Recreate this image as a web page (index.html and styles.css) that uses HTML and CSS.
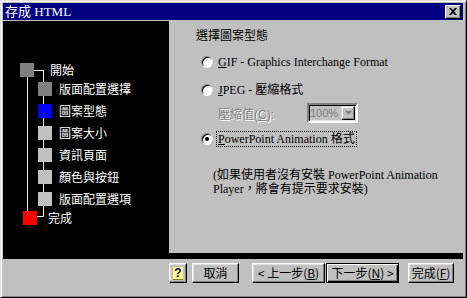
FILE: index.html
```html
<!DOCTYPE html>
<html lang="zh-Hant">
<head>
<meta charset="UTF-8" />
<title>存成 HTML</title>
<link rel="stylesheet" href="styles.css">
</head>
<body>
<div class="window">
  <div class="titlebar">
    <span class="title">存成 HTML</span>
    <button class="close" aria-label="關閉">
      <svg width="8" height="7" viewBox="0 0 8 7"><path d="M0 0h2l2 2 2-2h2L5 3.5 8 7H6L4 5 2 7H0l3-3.5z" fill="#000"/></svg>
    </button>
  </div>

  <div class="content">
    <div class="side">
      <svg class="tree-lines" width="166" height="232">
        <path d="M24.5 56V190M30 49.5H40.5M40.5 49V195.5M34 195.5H40.5" stroke="#f0f0f0" stroke-width="1" fill="none"/>
      </svg>
      <ul class="steps">
        <li class="step step-start"><span class="box dark"></span>開始</li>
        <li class="step"><span class="box dark"></span>版面配置選擇</li>
        <li class="step"><span class="box blue"></span>圖案型態</li>
        <li class="step"><span class="box"></span>圖案大小</li>
        <li class="step"><span class="box"></span>資訊頁面</li>
        <li class="step"><span class="box"></span>顏色與按鈕</li>
        <li class="step"><span class="box"></span>版面配置選項</li>
        <li class="step step-end"><span class="box red"></span>完成</li>
      </ul>
    </div>

    <div class="panel">
      <div class="heading">選擇圖案型態</div>

      <div class="option opt-gif">
        <span class="radio"></span>
        <span class="label"><u>G</u>IF - Graphics Interchange Format</span>
      </div>

      <div class="option opt-jpeg">
        <span class="radio"></span>
        <span class="label"><u>J</u>PEG - 壓縮格式</span>
      </div>

      <div class="quality">
        <span class="disabled-text">壓縮值(<u>C</u>):</span>
        <span class="combo">
          <span class="combo-value">100%</span>
          <span class="combo-btn">
            <svg width="7" height="4" viewBox="0 0 7 4"><path d="M0 0h7L3.5 4z" fill="#808080"/></svg>
          </span>
        </span>
      </div>

      <div class="option opt-ppt">
        <span class="radio checked"></span>
        <span class="label focus"><u>P</u>owerPoint Animation 格式</span>
      </div>

      <p class="note">(如果使用者沒有安裝 PowerPoint Animation<br>Player，將會有提示要求安裝)</p>
    </div>
  </div>

  <div class="footer">
    <button class="btn help" aria-label="說明"><span class="help-icon">?</span></button>
    <button class="btn btn-cancel">取消</button>
    <button class="btn btn-back">&lt; 上一步(<u>B</u>)</button>
    <button class="btn btn-next default">下一步(<u>N</u>) &gt;</button>
    <button class="btn btn-finish">完成(<u>F</u>)</button>
  </div>
</div>
</body>
</html>
```

FILE: styles.css
```css
/* dialogo estilo win95 */
body {
  margin: 0;
  background: #c0c0c0;
  font-family: "Liberation Serif", "Noto Sans CJK TC", serif;
  font-size: 12px;
  color: #000;
}
.window {
  width: 467px;
  height: 298px;
  box-sizing: border-box;
  background: #c0c0c0;
  border: 1px solid;
  border-color: #dfdfdf #000 #000 #dfdfdf;
  box-shadow: inset 1px 1px #fff, inset -1px -1px #808080;
  padding: 2px 3px 2px 2px;
}
.titlebar {
  height: 17px;
  background: #000080;
  color: #fff;
  display: flex;
  align-items: center;
  justify-content: space-between;
  padding: 0 2px 0 2px;
  margin-bottom: 1px;
}
.title {
  font-size: 13px;
  line-height: 17px;
}
.close {
  width: 16px;
  height: 14px;
  padding: 0;
  margin: 0;
  background: #c0c0c0;
  border: 1px solid;
  border-color: #fff #000 #000 #fff;
  box-shadow: inset -1px -1px #808080;
  display: flex;
  align-items: center;
  justify-content: center;
}

.content {
  display: flex;
  height: 232px;
  border-bottom: 6px solid #000;
}
.side {
  width: 166px;
  background: #000;
  color: #fff;
  position: relative;
}
.tree-lines {
  position: absolute;
  left: 0;
  top: 0;
}
.steps {
  list-style: none;
  margin: 0;
  padding: 42px 0 0 0;
  position: relative;
  font-family: "Noto Sans CJK TC", sans-serif;
  font-size: 12px;
}
.step {
  display: flex;
  align-items: flex-start;
  height: 22px;
  padding-left: 35px;
  line-height: 14px;
}
.step .box {
  width: 14px;
  height: 14px;
  background: #c0c0c0;
  margin-right: 7px;
  flex: none;
}
.step-start {
  height: 19px;
  padding-left: 17px;
}
.step-start .box {
  margin-right: 16px;
}
.step-end {
  margin-top: -3px;
  padding-left: 20px;
}
.step-end .box {
  margin-right: 11px;
}
.box.dark { background: #808080; }
.box.blue { background: #0000ff; }
.box.red { background: #ff0000; }

.panel {
  flex: 1;
  background: #c0c0c0;
  padding: 6px 0 0 27px;
}
.heading {
  font-family: "Noto Sans CJK TC", sans-serif;
  line-height: 16px;
  margin-bottom: 12px;
}
.option {
  display: flex;
  align-items: center;
  height: 14px;
  padding-left: 5px;
}
.opt-jpeg { margin-top: 14px; }
.opt-ppt { margin-top: 9px; }
.radio {
  width: 10px;
  height: 10px;
  border-radius: 50%;
  background: #fff;
  border: 1px solid;
  border-color: #808080 #dfdfdf #fff #808080;
  box-shadow: inset 1px 1px #000;
  margin-right: 4px;
  position: relative;
  flex: none;
}
.radio.checked::after {
  content: "";
  position: absolute;
  left: 3px;
  top: 3px;
  width: 4px;
  height: 4px;
  border-radius: 50%;
  background: #000;
}
.label {
  white-space: nowrap;
  line-height: 14px;
  padding: 0 1px;
}
.label.focus {
  outline: 1px dotted #000;
}
.quality {
  display: flex;
  align-items: center;
  height: 20px;
  margin-top: 6px;
  padding-left: 22px;
}
.disabled-text {
  color: #808080;
  text-shadow: 1px 1px #fff;
  font-family: "Liberation Sans", "Noto Sans CJK TC", sans-serif;
  width: 89px;
}
.combo {
  display: flex;
  align-items: center;
  width: 45px;
  height: 16px;
  border: 2px solid;
  border-color: #808080 #fff #fff #808080;
  box-shadow: inset 1px 1px #000, inset -1px -1px #dfdfdf;
  padding: 0 1px 0 1px;
}
.combo-value {
  flex: 1;
  color: #808080;
  font-family: "Liberation Sans", sans-serif;
  font-size: 11px;
  line-height: 14px;
}
.combo-btn {
  width: 14px;
  height: 14px;
  flex: none;
  box-sizing: border-box;
  border: 1px solid;
  border-color: #dfdfdf #000 #000 #dfdfdf;
  box-shadow: inset -1px -1px #808080, inset 1px 1px #fff;
  display: flex;
  align-items: center;
  justify-content: center;
}
.note {
  margin: 22px 0 0 17px;
  line-height: 14px;
  white-space: nowrap;
}

.footer {
  display: flex;
  padding: 4px 0 0 166px;
}
.btn {
  height: 20px;
  padding: 0;
  margin: 0;
  background: #c0c0c0;
  border: 1px solid;
  border-color: #fff #000 #000 #fff;
  box-shadow: inset -1px -1px #808080, inset 1px 1px #dfdfdf;
  font-family: "Noto Sans CJK TC", "Liberation Sans", sans-serif;
  font-size: 12px;
  color: #000;
  line-height: 16px;
}
.help {
  width: 18px;
  margin-right: 5px;
  display: flex;
  align-items: center;
  justify-content: center;
}
.help-icon {
  width: 10px;
  height: 12px;
  background: #ffff80;
  color: #000080;
  font-family: "Liberation Sans", sans-serif;
  font-weight: bold;
  font-size: 12px;
  line-height: 12px;
  text-align: center;
  border-bottom: 1px solid #808000;
}
.btn-cancel { width: 47px; margin-right: 13px; }
.btn-back { width: 73px; margin-right: 1px; }
.btn-next { width: 73px; margin-right: 9px; }
.btn-finish { width: 46px; }
.btn.default {
  border-color: #000;
  box-shadow: inset 1px 1px #fff, inset -1px -1px #000, inset -2px -2px #808080;
}
```
